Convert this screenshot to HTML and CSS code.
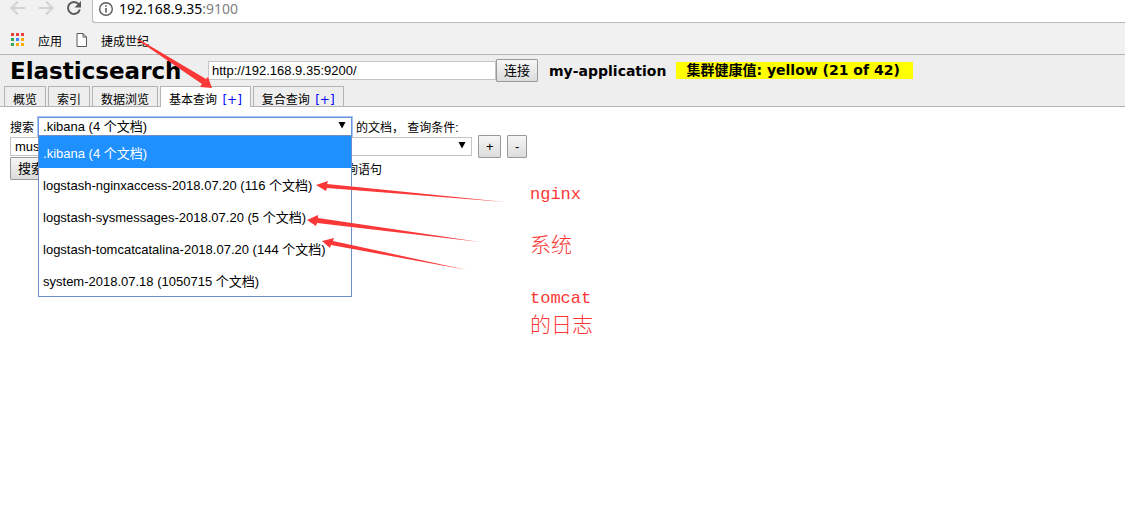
FILE: index.html
```html
<!DOCTYPE html>
<html lang="zh-CN">
<head>
<meta charset="utf-8">
<title>Elasticsearch</title>
<link rel="stylesheet" href="styles.css">
</head>
<body>
<div class="browser">
  <div class="toolbar">
    <button class="nav" aria-label="Back"><svg width="16" height="16" viewBox="0 0 16 16" fill="none" stroke="#d2d2d2" stroke-width="2"><path d="M15 8H2M8 1.500 1.500 8 8 14.500"/></svg></button>
    <button class="nav" aria-label="Forward"><svg width="16" height="16" viewBox="0 0 16 16" fill="none" stroke="#d2d2d2" stroke-width="2"><path d="M1 8h13M8 1.500 14.500 8 8 14.500"/></svg></button>
    <button class="nav" aria-label="Reload"><svg width="16" height="16" viewBox="0 0 16 16"><path d="M12.700 4.200A6 6 0 1 0 13.800 9.500" fill="none" stroke="#5a5a5a" stroke-width="2"/><path d="M15 1v6.500H8.500z" fill="#5a5a5a"/></svg></button>
    <div class="address">
      <svg width="16" height="16" viewBox="0 0 16 16"><circle cx="8" cy="8" r="6.300" fill="none" stroke="#5a5a5a" stroke-width="1.400"/><path d="M7.200 7h1.600v4.500H7.200zM7.200 4.200h1.600v1.600H7.200z" fill="#5a5a5a"/></svg>
      <span class="url">192.168.9.35<span class="port">:9100</span></span>
    </div>
  </div>
  <nav class="bookmarks">
    <a href="#" class="bookmark apps"><svg width="14" height="14" viewBox="0 0 14 14"><path fill="#ea4335" d="M0 0h3v3H0zM5 0h3v3H5zM10 0h3v3h-3z"/><path fill="#34a853" d="M0 5h3v3H0zM0 10h3v3H0z"/><path fill="#4285f4" d="M5 5h3v3H5z"/><path fill="#fbad05" d="M10 5h3v3h-3zM5 10h3v3H5zM10 10h3v3h-3z"/></svg>应用</a>
    <a href="#" class="bookmark"><svg width="12" height="14" viewBox="0 0 12 14" fill="#fff" stroke="#5a5a5a"><path d="M1 .5h6l3.500 3.500v9.500H1zM7 .5V4h3.500"/></svg>捷成世纪</a>
  </nav>
</div>
<header class="header">
  <form class="connect">
    <h1 class="title">Elasticsearch</h1>
    <div class="group">
      <input class="endpoint" type="text" aria-label="Endpoint" value="http://192.168.9.35:9200/">
      <button class="button" type="button">连接</button>
    </div>
    <strong class="cluster">my-application</strong>
    <strong class="health">集群健康值: yellow (21 of 42)</strong>
  </form>
  <nav class="tabs">
    <a class="tab" href="#">概览</a>
    <a class="tab" href="#">索引</a>
    <a class="tab" href="#">数据浏览</a>
    <a class="tab active" href="#">基本查询 <span class="add">[+]</span></a>
    <a class="tab" href="#">复合查询 <span class="add">[+]</span></a>
  </nav>
</header>
<main class="query">
  <div class="row">
    <label for="index">搜索</label>
    <div class="picker">
      <select id="index" class="select focused"><option>.kibana (4 个文档)</option></select>
      <svg class="caret" width="8" height="8" viewBox="0 0 8 8"><path d="M.5 1h7L4 7.500z"/></svg>
      <ul class="menu" role="listbox" aria-label="搜索">
        <li class="option selected" role="option" aria-selected="true">.kibana (4 个文档)</li>
        <li class="option" role="option">logstash-nginxaccess-2018.07.20 (116 个文档)</li>
        <li class="option" role="option">logstash-sysmessages-2018.07.20 (5 个文档)</li>
        <li class="option" role="option">logstash-tomcatcatalina-2018.07.20 (144 个文档)</li>
        <li class="option" role="option">system-2018.07.18 (1050715 个文档)</li>
      </ul>
    </div>
    <span>的文档， 查询条件:</span>
  </div>
  <div class="row">
    <div class="clause">
      <select class="select" aria-label="must"><option>must</option></select>
      <svg class="caret" width="8" height="8" viewBox="0 0 8 8"><path d="M.5 1h7L4 7.500z"/></svg>
    </div>
    <button class="button small" type="button">+</button>
    <button class="button small minus" type="button">-</button>
  </div>
  <div class="row submit">
    <button class="button" type="button">搜索</button>
    <span class="source">显示查询语句</span>
  </div>
</main>
<svg class="arrows" width="520" height="300" viewBox="0 0 520 300" fill="#fb3838">
  <path d="M136 39 140 40 206 79 208 77 212 88 200 87 202 84z"/>
  <path d="M505 202 327 188 326 191 316 185 328 181 327 184z"/>
  <path d="M480 242 317 223 316 226 307 220 318 215 318 218z"/>
  <path d="M467 270 331 245 330 248 322 241 334 238 333 241z"/>
</svg>
<p class="note nginx">nginx</p>
<p class="note system"><span class="han">系统</span></p>
<p class="note tomcat">tomcat<br><span class="han">的日志</span></p>
</body>
</html>
```
FILE: styles.css
```css
* {
  box-sizing: border-box;
}

body {
  min-height: 100vh;
  margin: 0;
  position: relative;
  background: #fff;
  color: #000;
  font-family: "Liberation Sans", "Noto Sans CJK SC", sans-serif;
  font-size: 12px;
}

a {
  color: inherit;
  text-decoration: none;
}

.browser {
  background: #f1f1f1;
  border-bottom: 1px solid #b4b4b4;
}

.toolbar {
  display: flex;
  height: 23px;
  padding-left: 10px;
  gap: 12px;
}

.nav {
  width: 16px;
  height: 17px;
  padding: 0;
  border: 0;
  background: none;
}

.address {
  flex: 1;
  display: flex;
  gap: 5px;
  margin-left: -2px;
  padding: 1px 5px;
  background: #fff;
  border: solid #b8b8b8;
  border-width: 0 0 1px 1px;
  border-radius: 0 0 0 3px;
}

.url {
  font-family: "Noto Sans", sans-serif;
  font-size: 14px;
  line-height: 16px;
}

.port {
  color: #808080;
}

.bookmarks {
  display: flex;
  align-items: center;
  height: 31px;
  padding: 3px 11px 0;
  gap: 14px;
}

.bookmark {
  display: flex;
  align-items: center;
  gap: 13px;
}

.header {
  background: #eee;
  border-bottom: 1px solid #b4b4b4;
}

.connect {
  display: flex;
  align-items: center;
  height: 31px;
  padding-left: 10px;
  font-family: "DejaVu Sans", "Noto Sans CJK SC", sans-serif;
  font-size: 14px;
}

.title {
  width: 198px;
  margin: 0;
  font-size: 23px;
  line-height: 30px;
}

.group {
  display: flex;
  align-items: center;
}

.endpoint {
  width: 288px;
  height: 19px;
  padding: 0 3px;
  border: 1px solid #c4c4c4;
  background: #fff;
  font: 13px "Liberation Sans", sans-serif;
}

.button {
  height: 23px;
  padding: 0 7px;
  border: 1px solid #999;
  border-radius: 1px;
  background: linear-gradient(#f6f6f6, #dcdcdc);
  color: #000;
  font: 13px/19px "Liberation Sans", "Noto Sans CJK SC", sans-serif;
}

.cluster {
  margin: 0 10px 0 11px;
}

.health {
  padding: 0 13px 0 10px;
  background: #ff0;
  line-height: 17px;
}

.tabs {
  display: flex;
  gap: 2px;
  height: 20px;
  padding-left: 4px;
}

.tab {
  padding: 5px 8px 0;
  border: 1px solid #b4b4b4;
  border-bottom: 0;
  line-height: 16px;
  white-space: nowrap;
}

.active {
  height: 21px;
  background: #fff;
}

.add {
  margin-left: 2px;
  color: #00f;
  font-family: "DejaVu Sans", sans-serif;
}

.query {
  padding: 9px 10px;
}

.row {
  display: flex;
  align-items: center;
  height: 20px;
  gap: 4px;
}

.picker,
.clause {
  position: relative;
}

.picker {
  width: 314px;
}

.clause {
  width: 462px;
  margin-right: 2px;
}

.select {
  display: block;
  width: 100%;
  height: 19px;
  padding: 0 4px;
  appearance: none;
  border: 1px solid #c4c4c4;
  border-radius: 0;
  background: #fff;
  color: #000;
  font: 13px "Liberation Sans", "Noto Sans CJK SC", sans-serif;
}

.focused {
  border-color: #6b94e0;
  outline: 1px solid #a8c4f4;
}

.caret {
  position: absolute;
  right: 6px;
  top: 4px;
}

.menu {
  position: absolute;
  z-index: 1;
  top: 18px;
  left: 0;
  width: 100%;
  margin: 0;
  padding: 0;
  list-style: none;
  background: #fff;
  border: 1px solid #6f8fcb;
}

.option {
  height: 32px;
  padding: 0 4px;
  font-size: 13px;
  line-height: 36px;
  white-space: nowrap;
}

.selected {
  background: #1e90ff;
  color: #fff;
}

.small {
  width: 23px;
  margin-right: 2px;
}

.minus {
  width: 20px;
}

.submit {
  height: 24px;
  justify-content: space-between;
  width: 372px;
}

.arrows {
  position: absolute;
  z-index: 2;
  top: 0;
  left: 0;
}

.note {
  position: absolute;
  left: 530px;
  margin: 0;
  color: #fb3838;
  font: 17px/25px "Liberation Mono", monospace;
}

.han {
  font: 300 21px/25px "Noto Sans CJK SC", sans-serif;
}

.nginx {
  top: 182px;
}

.system {
  top: 231px;
}

.tomcat {
  top: 286px;
}
```
